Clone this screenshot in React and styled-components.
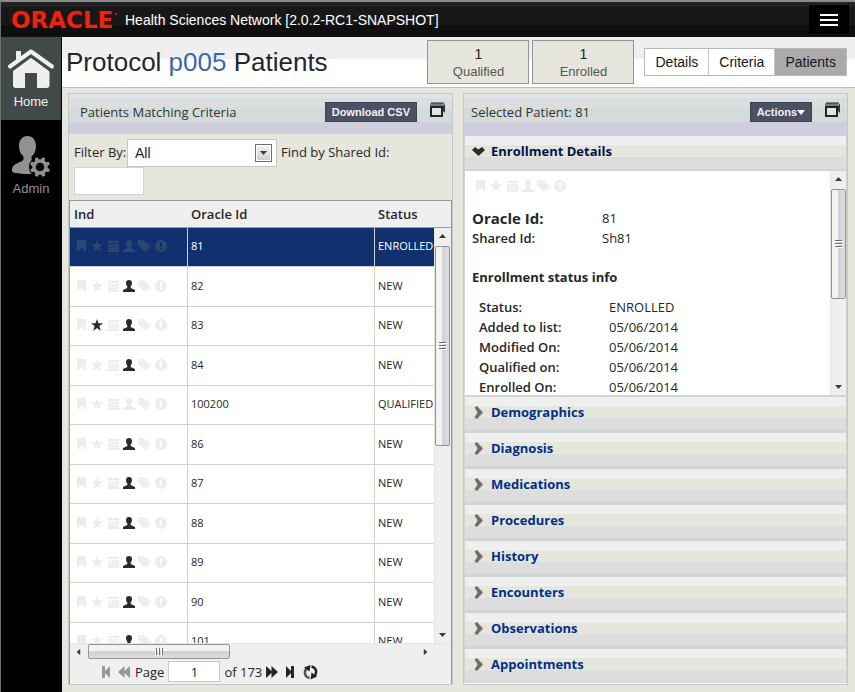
import styled, { createGlobalStyle } from "styled-components";
import { useState } from "react";

const GlobalStyle = createGlobalStyle`
  * {
    box-sizing: border-box;
  }
  body {
    margin: 0;
    background-color: #e6e6dd;
    color: #262626;
    font-family: "Open Sans", "Noto Sans", sans-serif;
    font-size: 13px;
    line-height: 20px;
  }
  button, input, select {
    font-family: inherit;
    font-size: inherit;
    margin: 0;
  }
`;

const Page = styled.div`
  min-height: 100vh;
  display: flex;
  flex-direction: column;
  border-top: 2px solid #8c8c8c;
  border-left: 1px solid #6b6f6f;
`;

/* top bar */
const TopBar = styled.header`
  height: 35px;
  display: flex;
  align-items: center;
  padding: 0 6px 0 10px;
  background: linear-gradient(#222 5px, #181818 5px, #181818 23px, #0f0f0f 23px);
  color: #fff;
  font-family: "Liberation Sans", Arial, sans-serif;
`;
const Logo = styled.span`
  width: 114px;
  display: flex;
  color: #f3200b;
  font-family: "DejaVu Sans", sans-serif;
  font-size: 23px;
  font-weight: bold;
`;
const LogoMark = styled.i`
  width: 2px;
  height: 2px;
  margin: 3px 0 0 2px;
  border-radius: 50%;
  background-color: #f3200b;
`;
const AppName = styled.span`
  flex: 1;
  font-size: 14px;
`;
const MenuButton = styled.button`
  width: 40px;
  height: 29px;
  display: flex;
  flex-direction: column;
  align-items: center;
  justify-content: center;
  gap: 3px;
  padding: 0;
  border: 0;
  background-color: #000;
  cursor: pointer;
`;
const MenuLine = styled.span`
  width: 18px;
  height: 2px;
  background-color: #fff;
`;

const Body = styled.div`
  flex: 1;
  display: flex;
`;

/* sidebar */
const Sidebar = styled.nav`
  width: 61px;
  flex-shrink: 0;
  background-color: #000;
`;
const SideLink = styled.a`
  height: 83px;
  display: flex;
  flex-direction: column;
  align-items: center;
  padding-top: 12px;
  gap: 2px;
  border-right: 1px solid #000;
  background-color: ${(prop) => (prop.$active ? "#414a48" : "#000")};
  color: ${(prop) => (prop.$active ? "#efefef" : "#919191")};
  font-family: "Liberation Sans", Arial, sans-serif;
  text-decoration: none;
  & + & {
    padding-top: 16px;
  }
`;

const Content = styled.div`
  flex: 1;
  min-width: 0;
  display: flex;
  flex-direction: column;
`;

/* title */
const TitleBar = styled.div`
  height: 51px;
  display: flex;
  align-items: center;
  padding: 0 8px 0 4px;
  border-bottom: 1px solid #bdbdbd;
  background: linear-gradient(#efefef 22px, #fff 22px);
  font-family: "Liberation Sans", Arial, sans-serif;
`;
const Title = styled.h1`
  flex: 1;
  margin: 0;
  font-size: 26px;
  font-weight: normal;
  white-space: nowrap;
  color: #23252f;
`;
const Protocol = styled.span`
  color: #3a67ab;
`;
const Stats = styled.div`
  display: flex;
  gap: 3px;
  margin-right: 10px;
`;
const Stat = styled.div`
  width: 102px;
  height: 44px;
  padding-top: 4px;
  border: 1px solid #8f9695;
  background-color: #e6e6dd;
  line-height: 18px;
  text-align: center;
  color: #555;
`;
const StatCount = styled.div`
  font-size: 14px;
  color: #222;
`;
const Tabs = styled.nav`
  display: flex;
  border: 1px solid #b9b9b9;
`;
const Tab = styled.a`
  padding: 0 10px;
  background-color: ${(prop) => (prop.$active ? "#aaa" : "#fff")};
  color: #16161a;
  font-size: 14px;
  line-height: 26px;
  text-decoration: none;
  & + & {
    border-left: 1px solid #c6c6c6;
  }
`;

/* panels */
const Panels = styled.main`
  flex: 1;
  display: grid;
  grid-template-columns: minmax(0, 1fr) minmax(0, 1fr);
  gap: 10px;
  padding: 5px 7px 7px 6px;
`;
const Panel = styled.section`
  display: flex;
  flex-direction: column;
  border: 1px solid #c3c7c8;
  background-color: ${(prop) => prop.$color || "#fff"};
`;
const PanelHead = styled.div`
  height: ${(prop) => prop.$height}px;
  display: flex;
  align-items: flex-start;
  padding: 8px 6px 0 ${(prop) => prop.$indent}px;
  background: linear-gradient(
    #dce5ef 4px,
    #ddd 4px,
    #ddd 14px,
    #d4dcda 14px,
    #d4dcda 28px,
    #cfcedd 28px
  );
`;
const PanelTitle = styled.h2`
  flex: 1;
  margin: 0;
  font-size: 13px;
  font-weight: normal;
  color: #333;
`;
const DarkButton = styled.button`
  height: 20px;
  display: flex;
  align-items: center;
  padding: 0 6px;
  margin-right: 12px;
  border: 1px solid #34465a;
  background-color: #4b5063;
  color: #f2f2f2;
  font-family: "Liberation Sans", Arial, sans-serif;
  font-size: 11px;
  font-weight: bold;
  cursor: pointer;
`;
const IconButton = styled.button`
  display: flex;
  padding: 0;
  border: 0;
  background: none;
  color: #262626;
  cursor: pointer;
  &:disabled {
    color: #999;
  }
`;

/* filter */
const Filters = styled.form`
  height: 66px;
  display: flex;
  flex-wrap: wrap;
  align-content: flex-start;
  align-items: flex-start;
  padding: 5px 5px 0;
`;
const FilterLabel = styled.label`
  width: 53px;
  line-height: 26px;
  white-space: nowrap;
`;
const FindLabel = styled.label`
  margin-left: 4px;
  line-height: 26px;
`;
const SelectBox = styled.div`
  width: 150px;
  display: flex;
  position: relative;
`;
const Select = styled.select`
  width: 100%;
  height: 28px;
  padding: 0 7px;
  appearance: none;
  border: 1px solid #c6c6c6;
  border-radius: 0;
  background-color: #fff;
  color: #222;
  font-family: "Liberation Sans", Arial, sans-serif;
  font-size: 14px;
`;
const SelectArrow = styled.span`
  position: absolute;
  top: 5px;
  right: 5px;
  width: 17px;
  height: 18px;
  display: grid;
  place-items: center;
  border: 1px solid #6f7173;
  background: linear-gradient(#f4f4f4, #cdd0d2);
  box-shadow: inset 0 0 0 1px #fff;
  pointer-events: none;
`;
const FindInput = styled.input`
  width: 70px;
  height: 28px;
  border: 1px solid #d4d4d4;
`;

/* grid */
const GridBox = styled.div`
  flex: 1 1 0;
  min-height: 0;
  display: flex;
  flex-direction: column;
  border: solid #979797;
  border-width: 1px 1px 0;
  background-color: #efefef;
`;
const GridRow = styled.div`
  flex: 1 1 0;
  min-height: 0;
  display: flex;
`;
const Viewport = styled.div`
  flex: 1;
  overflow: hidden;
`;
const Table = styled.table`
  width: 100%;
  table-layout: fixed;
  border-collapse: separate;
  border-spacing: 0;
`;
const Col = styled.col`
  width: ${(prop) => prop.$width}px;
`;
const Th = styled.th`
  height: 27px;
  padding: 0 4px;
  border-bottom: 1px solid #979797;
  font-weight: 600;
  text-align: left;
`;
const Tr = styled.tr`
  height: 40px;
  background-color: ${(prop) => (prop.$selected ? "#103070" : "#fff")};
  color: ${(prop) => (prop.$selected ? "#fff" : "#262626")};
  cursor: pointer;
  &:nth-child(odd) {
    height: 39px;
  }
`;
const Td = styled.td`
  padding: 0 0 2px 3px;
  border-bottom: 1px solid #cdd5d4;
  font-size: 11px;
  line-height: 16px;
  white-space: nowrap;
  & + & {
    border-left: 1px solid #cdd5d4;
  }
`;
const Icons = styled.span`
  display: flex;
  align-items: center;
  gap: 4px;
  padding-left: 2px;
`;
const IconSlot = styled.span`
  width: 12px;
  height: 12px;
  display: flex;
  align-items: center;
  justify-content: center;
  color: ${(prop) => (prop.$on ? "#2b2b2b" : prop.$selected ? "#2c4774" : "#ededed")};
  svg {
    flex-shrink: 0;
  }
`;

/* scrollbars */
const ScrollSide = styled.div`
  width: 17px;
  display: flex;
  flex-direction: column;
`;
const ScrollHead = styled.div`
  height: 27px;
  border-bottom: 1px solid #979797;
`;
const VScroll = styled.div`
  flex: 1;
  width: 16px;
  display: flex;
  flex-direction: column;
  align-items: center;
  justify-content: space-between;
  padding: 6px 0;
  border-left: 1px solid #e6e6dd;
  background-color: #efefef;
`;
const DetailsScroll = styled(VScroll)`
  flex: none;
`;
const VThumb = styled.div`
  width: 15px;
  height: ${(prop) => prop.$size}px;
  margin: 8px 0 auto;
  display: grid;
  place-items: center;
  border: 1px solid #929496;
  border-radius: 2px;
  background: linear-gradient(90deg, #f3f3f3 6px, #cfd2d6 6px, #dcdcdf);
`;
const HScroll = styled.div`
  height: 16px;
  display: flex;
  align-items: center;
  padding: 0 22px 0 5px;
  border-top: 1px solid #e6e6dd;
`;
const HThumb = styled.div`
  width: 40%;
  height: 15px;
  margin: 0 auto 0 6px;
  display: grid;
  place-items: center;
  border: 1px solid #929496;
  border-radius: 2px;
  background: linear-gradient(#f3f3f3 6px, #cfd2d6 6px, #dcdcdf);
`;
const Pager = styled.div`
  height: 25px;
  display: flex;
  align-items: center;
  padding-left: 31px;
  background-color: #efefef;
`;
const PagerLabel = styled.label`
  margin: 0 4px 0 5px;
`;
const PagerTotal = styled.span`
  margin: 0 4px;
`;
const PageInput = styled.input`
  width: 52px;
  height: 21px;
  border: 1px solid #c9c9c9;
  text-align: center;
  color: #222;
`;
const PagerButtons = styled.span`
  display: flex;
  align-items: center;
  gap: 8px;
`;

/* accordion */
const SectionButton = styled.button`
  width: 100%;
  height: ${(prop) => (prop.$open ? 35 : 36)}px;
  display: flex;
  align-items: center;
  gap: 6px;
  padding: 0 7px 4px;
  border: solid #cfd6d3;
  border-width: ${(prop) => (prop.$open ? "0 1px 2px" : "2px 1px 1px")};
  background: linear-gradient(
    #efefef 9px,
    #e6e6dd 9px,
    #e6e6dd 21px,
    #ddd 21px
  );
  color: ${(prop) => (prop.$open ? "#00134d" : "#002f87")};
  font-weight: bold;
  text-align: left;
  cursor: pointer;
`;
const ArrowSlot = styled.span`
  width: 13px;
  padding-top: 2px;
  display: flex;
  justify-content: center;
`;
const Details = styled.div`
  height: 224px;
  display: flex;
  border: solid #cfd6d3;
  border-width: 0 1px;
`;
const DetailsText = styled.div`
  flex: 1;
  overflow: hidden;
  padding: 9px 6px 0 7px;
`;
const DetailsTitle = styled.h3`
  margin: 19px 0 10px;
  font-size: 13px;
`;
const Fields = styled.dl`
  display: grid;
  grid-template-columns: 130px 1fr;
  margin: 0;
  padding-left: ${(prop) => prop.$indent}px;
`;
const Name = styled.dt`
  font-size: ${(prop) => (prop.$large ? 15 : 13)}px;
  font-weight: ${(prop) => (prop.$large ? "bold" : 600)};
`;
const Value = styled.dd`
  margin: 0;
`;
const IdBlock = styled.div`
  margin-top: 16px;
`;

const Arrow = ({ rotate }) => (
  <svg width="7" height="4" viewBox="0 0 7 4" style={{ transform: `rotate(${rotate}deg)` }}>
    <path d="M0 4 3.5 0 7 4z" fill="#3b3b3b" />
  </svg>
);

const Grip = ({ rotate = 0 }) => (
  <svg width="8" height="8" viewBox="0 0 8 8" style={{ transform: `rotate(${rotate}deg)` }}>
    <path d="M0 .5h7M0 3.5h7M0 6.5h7" stroke="#6d7073" />
    <path d="M1 1.5h7M1 4.5h7M1 7.5h7" stroke="#fff" />
  </svg>
);

const HomeIcon = () => (
  <svg width="48" height="41" viewBox="0 0 48 41" fill="currentColor">
    <path d="M24 8 42.500 20v16q0 3-3 3H30V24H18v15H9q-3 0-3-3V20z" />
    <path d="M9 3q0-1 1-1h3q1 0 1 1v7H9z" />
    <path d="M3 20 24 4.500 45 20" fill="none" stroke="#414a48" strokeWidth="7" />
    <path d="M9 3q0-1 1-1h3q1 0 1 1v7l-5 3z" />
    <path d="M3 17.500 24 2.500l21 15" fill="none" stroke="currentColor" strokeWidth="4" strokeLinecap="round" strokeLinejoin="round" />
  </svg>
);

const teeth = [22, 67, 112, 157, 202, 247, 292, 337];

const AdminIcon = () => (
  <svg width="39" height="41" viewBox="0 0 39 41" fill="currentColor">
    <path d="M15.500 0C21 0 24 4.500 24 10c0 4.500-1.500 8-4.500 10.500V23c1 3 8 4 9 8 1 5-4 7-10 7-9 0-17.500 0-18.500-3-.5-9 11.500-8 11.500-12v-2.500C8.500 18 7 14.500 7 10 7 4.500 10 0 15.500 0z" />
    <circle cx="28" cy="31" r="11" fill="#000" />
    {teeth.map((deg) => (
      <path key={deg} d="M25.500 26 26.500 21h3l1 5z" transform={`rotate(${deg} 28 31)`} />
    ))}
    <circle cx="28" cy="31" r="6" fill="none" stroke="currentColor" strokeWidth="3.500" />
  </svg>
);

const WindowIcon = () => (
  <svg width="17" height="16" viewBox="0 0 17 16">
    <path d="M2 1h12v3H1V2z" fill="#777a7c" />
    <path d="M2 1h13" stroke="#262626" />
    <path d="M2 5h11v9H2z" fill="#dfe5e4" stroke="#1f2226" strokeWidth="2" />
    <path d="M14 3.500 16 1.500V11l-2-2z" fill="#35383b" />
  </svg>
);

const BookmarkIcon = () => (
  <svg width="9" height="12" viewBox="0 0 9 12" fill="currentColor">
    <path d="M0 0h9v12L4.500 8 0 12z" />
  </svg>
);

const StarIcon = () => (
  <svg width="12" height="12" viewBox="0 0 12 12" fill="currentColor">
    <path d="M6 0 7.500 4.200H12L8.400 7l1.400 4.700L6 9l-3.800 2.700L3.600 7 0 4.200h4.500z" />
  </svg>
);

const CalendarIcon = () => (
  <svg width="11" height="12" viewBox="0 0 11 12" fill="currentColor">
    <path d="M2 0h1v1h5V0h1v1h2v2H0V1h2z" />
    <path
      fillRule="evenodd"
      d="M0 4h11v8H0zM1 5v1h1V5zm2 0v1h1V5zm2 0v1h1V5zm2 0v1h1V5zm2 0v1h1V5zM1 7v1h1V7zm2 0v1h1V7zm2 0v1h1V7zm2 0v1h1V7zm2 0v1h1V7zM1 9v1h1V9zm2 0v1h1V9zm2 0v1h1V9zm2 0v1h1V9zm2 0v1h1V9z"
    />
  </svg>
);

const PersonIcon = () => (
  <svg width="12" height="12" viewBox="0 0 12 12" fill="currentColor">
    <path d="M6 0c2 0 3 1 3 3 0 1.500-.5 2.500-1.300 3.500V8L12 10v2H0v-2l4.300-2V6.500C3.500 5.500 3 4.500 3 3c0-2 1-3 3-3z" />
  </svg>
);

const TagsIcon = () => (
  <svg width="14" height="12" viewBox="0 0 14 12" fill="currentColor">
    <path fillRule="evenodd" d="M0 1q0-1 1-1h4l6 6.500L6.500 11.500 0 5zM2 1.500v1.500h1.500V1.500z" />
    <path d="M7 1l5.500 5.500L8.500 11" fill="none" stroke="currentColor" strokeWidth="1.200" />
  </svg>
);

const AlertIcon = () => (
  <svg width="12" height="12" viewBox="0 0 12 12" fill="currentColor">
    <path fillRule="evenodd" d="M6 0a6 6 0 0 1 0 12A6 6 0 0 1 6 0zM5 2.500v4.500h2V2.500zM5 8v1.500h2V8z" />
  </svg>
);

const SkipIcon = ({ flip }) => (
  <svg width="9" height="12" viewBox="0 0 9 12" fill="currentColor" style={{ transform: flip ? "scaleX(-1)" : "none" }}>
    <path d="M0 0l5 5V0h3v12H5V7l-5 5z" />
  </svg>
);

const FastIcon = ({ flip }) => (
  <svg width="12" height="12" viewBox="0 0 12 12" fill="currentColor" style={{ transform: flip ? "scaleX(-1)" : "none" }}>
    <path d="M0 0l5.500 5V0L12 6l-6.500 6V7L0 12z" />
  </svg>
);

const RefreshIcon = () => (
  <svg width="15" height="16" viewBox="0 0 15 16">
    <path d="M6.500 14C1.500 13 .5 7.500 4 4" fill="none" stroke="#555" strokeWidth="2.500" />
    <path d="M8.500 2.500c5 1 6 6.500 2.500 10" fill="none" stroke="#222" strokeWidth="2.500" />
    <path d="M1 3.500 7.500 1 6.500 7.500z" fill="#222" />
    <path d="M14 12.500 7.500 15.500l1-7z" fill="#222" />
  </svg>
);

const SectionArrow = ({ open }) =>
  open ? (
    <svg width="13" height="9" viewBox="0 0 13 9">
      <path d="M0 3 3 0l3.500 2.500L10 0l3 3-6.500 6z" fill="#2d2d2d" />
    </svg>
  ) : (
    <svg width="9" height="13" viewBox="0 0 9 13">
      <path d="M.5 1.500 3 0l6 6.500L3 13 .5 11.500 3.500 6.500z" fill="#6f6f6f" />
    </svg>
  );

const indicators = [
  ["bookmark", BookmarkIcon],
  ["star", StarIcon],
  ["calendar", CalendarIcon],
  ["person", PersonIcon],
  ["tags", TagsIcon],
  ["alert", AlertIcon],
];

const Indicators = ({ active = [], selected }) => (
  <Icons>
    {indicators.map(([name, Icon]) => (
      <IconSlot key={name} $on={active.includes(name)} $selected={selected}>
        <Icon />
      </IconSlot>
    ))}
  </Icons>
);

const patients = [
  { id: "81", status: "ENROLLED", active: [] },
  { id: "82", status: "NEW", active: ["person"] },
  { id: "83", status: "NEW", active: ["star", "person"] },
  { id: "84", status: "NEW", active: ["person"] },
  { id: "100200", status: "QUALIFIED", active: [] },
  { id: "86", status: "NEW", active: ["person"] },
  { id: "87", status: "NEW", active: ["person"] },
  { id: "88", status: "NEW", active: ["person"] },
  { id: "89", status: "NEW", active: ["person"] },
  { id: "90", status: "NEW", active: ["person"] },
  { id: "101", status: "NEW", active: ["person"] },
];

const statusInfo = [
  ["Status:", "ENROLLED"],
  ["Added to list:", "05/06/2014"],
  ["Modified On:", "05/06/2014"],
  ["Qualified on:", "05/06/2014"],
  ["Enrolled On:", "05/06/2014"],
];

const sections = [
  "Demographics",
  "Diagnosis",
  "Medications",
  "Procedures",
  "History",
  "Encounters",
  "Observations",
  "Appointments",
];

const PatientList = ({ selected, setSelected }) => (
  <Panel $color="#e6e6dd">
    <PanelHead $height={40} $indent={11}>
      <PanelTitle>Patients Matching Criteria</PanelTitle>
      <DarkButton type="button">Download CSV</DarkButton>
      <IconButton type="button" aria-label="Maximize list">
        <WindowIcon />
      </IconButton>
    </PanelHead>
    <Filters>
      <FilterLabel htmlFor="filter">Filter By:</FilterLabel>
      <SelectBox>
        <Select id="filter" defaultValue="All">
          <option>All</option>
        </Select>
        <SelectArrow>
          <Arrow rotate={180} />
        </SelectArrow>
      </SelectBox>
      <FindLabel htmlFor="shared">Find by Shared Id:</FindLabel>
      <FindInput id="shared" type="text" />
    </Filters>
    <GridBox>
      <GridRow>
        <Viewport>
          <Table>
            <colgroup>
              <Col $width={117} />
              <col />
              <Col $width={60} />
            </colgroup>
            <thead>
              <tr>
                <Th>Ind</Th>
                <Th>Oracle Id</Th>
                <Th>Status</Th>
              </tr>
            </thead>
            <tbody>
              {patients.map(({ id, status, active }) => (
                <Tr key={id} $selected={id === selected} onClick={() => setSelected(id)}>
                  <Td>
                    <Indicators active={active} selected={id === selected} />
                  </Td>
                  <Td>{id}</Td>
                  <Td>{status}</Td>
                </Tr>
              ))}
            </tbody>
          </Table>
        </Viewport>
        <ScrollSide>
          <ScrollHead />
          <VScroll>
            <Arrow rotate={0} />
            <VThumb $size={200}>
              <Grip />
            </VThumb>
            <Arrow rotate={180} />
          </VScroll>
        </ScrollSide>
      </GridRow>
      <HScroll>
        <Arrow rotate={270} />
        <HThumb>
          <Grip rotate={90} />
        </HThumb>
        <Arrow rotate={90} />
      </HScroll>
      <Pager>
        <PagerButtons>
          <IconButton type="button" aria-label="First page" disabled>
            <SkipIcon flip />
          </IconButton>
          <IconButton type="button" aria-label="Previous page" disabled>
            <FastIcon flip />
          </IconButton>
        </PagerButtons>
        <PagerLabel htmlFor="page">Page</PagerLabel>
        <PageInput id="page" type="text" defaultValue="1" />
        <PagerTotal>of 173</PagerTotal>
        <PagerButtons>
          <IconButton type="button" aria-label="Next page">
            <FastIcon />
          </IconButton>
          <IconButton type="button" aria-label="Last page">
            <SkipIcon />
          </IconButton>
          <IconButton type="button" aria-label="Reload">
            <RefreshIcon />
          </IconButton>
        </PagerButtons>
      </Pager>
    </GridBox>
  </Panel>
);

const PatientDetails = ({ selected }) => (
  <Panel>
    <PanelHead $height={42} $indent={7}>
      <PanelTitle>Selected Patient: {selected}</PanelTitle>
      <DarkButton type="button">
        Actions
        <svg width="8" height="5" viewBox="0 0 8 5">
          <path d="M0 0h8L4 5z" fill="#fff" />
        </svg>
      </DarkButton>
      <IconButton type="button" aria-label="Maximize details">
        <WindowIcon />
      </IconButton>
    </PanelHead>
    <SectionButton type="button" $open aria-expanded="true">
      <ArrowSlot>
        <SectionArrow open />
      </ArrowSlot>
      Enrollment Details
    </SectionButton>
    <Details>
      <DetailsText>
        <Indicators />
        <IdBlock>
          <Fields $indent={0}>
            <Name $large>Oracle Id:</Name>
            <Value>{selected}</Value>
            <Name>Shared Id:</Name>
            <Value>Sh{selected}</Value>
          </Fields>
        </IdBlock>
        <DetailsTitle>Enrollment status info</DetailsTitle>
        <Fields $indent={7}>
          {statusInfo.map(([name, value]) => [
            <Name key={name}>{name}</Name>,
            <Value key={`${name}-value`}>{value}</Value>,
          ])}
        </Fields>
      </DetailsText>
      <DetailsScroll>
        <Arrow rotate={0} />
        <VThumb $size={110}>
          <Grip />
        </VThumb>
        <Arrow rotate={180} />
      </DetailsScroll>
    </Details>
    {sections.map((name) => (
      <SectionButton key={name} type="button" aria-expanded="false">
        <ArrowSlot>
          <SectionArrow />
        </ArrowSlot>
        {name}
      </SectionButton>
    ))}
  </Panel>
);

const App = () => {
  const [selected, setSelected] = useState("81");

  return (
    <Page>
      <GlobalStyle />
      <TopBar>
        <Logo>
          ORACLE
          <LogoMark />
        </Logo>
        <AppName>Health Sciences Network [2.0.2-RC1-SNAPSHOT]</AppName>
        <MenuButton type="button" aria-label="Menu">
          <MenuLine />
          <MenuLine />
          <MenuLine />
        </MenuButton>
      </TopBar>
      <Body>
        <Sidebar>
          <SideLink href="#home" $active>
            <HomeIcon />
            Home
          </SideLink>
          <SideLink href="#admin">
            <AdminIcon />
            Admin
          </SideLink>
        </Sidebar>
        <Content>
          <TitleBar>
            <Title>
              Protocol <Protocol>p005</Protocol> Patients
            </Title>
            <Stats>
              <Stat>
                <StatCount>1</StatCount>
                Qualified
              </Stat>
              <Stat>
                <StatCount>1</StatCount>
                Enrolled
              </Stat>
            </Stats>
            <Tabs>
              <Tab href="#details">Details</Tab>
              <Tab href="#criteria">Criteria</Tab>
              <Tab href="#patients" $active>
                Patients
              </Tab>
            </Tabs>
          </TitleBar>
          <Panels>
            <PatientList selected={selected} setSelected={setSelected} />
            <PatientDetails selected={selected} />
          </Panels>
        </Content>
      </Body>
    </Page>
  );
};

export default App;
